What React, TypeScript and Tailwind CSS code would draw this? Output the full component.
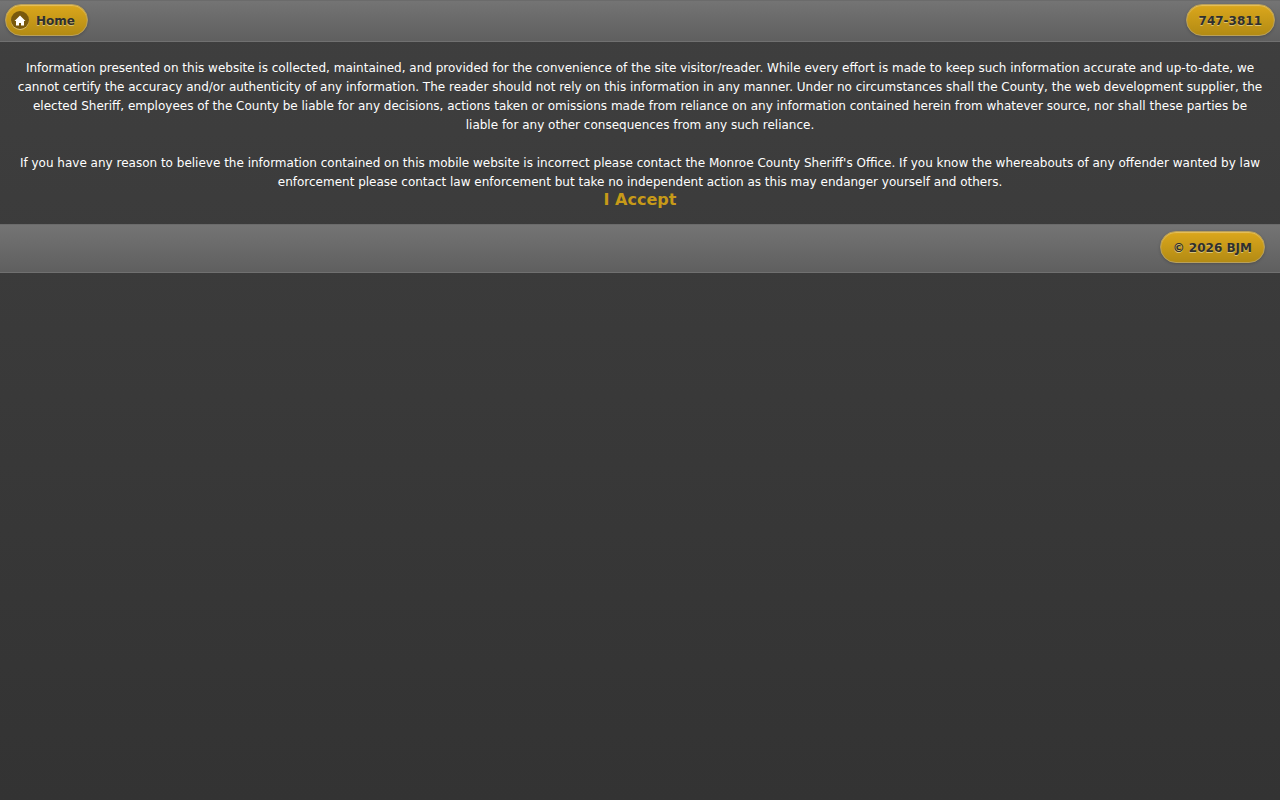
import type { ReactNode } from "react";

const barClass =
  "flex border-y border-[#2a2a2a] border-t-[#6b6b6b] border-b-[#707070] bg-linear-to-b from-[#747474] to-[#5f5f5f]";

function PillLink({ href, icon, children }: { href: string; icon?: ReactNode; children: ReactNode }) {
  return (
    <a
      href={href}
      className={`flex h-8 items-center rounded-full border border-[#b9a05a] bg-linear-to-b from-[#dba71c] to-[#b38b14] pr-3 text-xs leading-4 font-bold whitespace-nowrap text-[#2f2f2f] shadow-[inset_0_1px_1px_rgba(255,255,255,0.3),0_1px_3px_rgba(0,0,0,0.2)] [text-shadow:0_1px_0_#d9c474] ${icon ? "gap-[7px] pl-[5px]" : "pl-3"}`}
    >
      {icon}
      <span className="pt-px">{children}</span>
    </a>
  );
}

function HomeIcon() {
  return (
    <span className="flex size-[18px] items-center justify-center rounded-full bg-[#79590d] shadow-[0_1px_0_rgba(255,255,255,0.4)]">
      <svg viewBox="0 0 12 11" className="h-[11px] w-3" fill="#fff" aria-hidden="true">
        <path d="M6 .5 .5 6H2v4.5h3V8h2v2.500h3V6h1.500z" />
      </svg>
    </span>
  );
}

export default function App() {
  return (
    <div className="min-h-screen bg-linear-to-b from-[#3f3f3f] to-[#333333] font-['DejaVu_Sans',sans-serif] text-white">
      <header className={`${barClass} justify-between px-[5px] pt-[3px] pb-[5px]`}>
        <PillLink href="#home" icon={<HomeIcon />}>Home</PillLink>
        <PillLink href="tel:747-3811">747-3811</PillLink>
      </header>
      <main className="px-[15px] pt-[17px] pb-4 text-center text-xs leading-[19px]">
        <p>
          Information presented on this website is collected, maintained, and provided for the convenience of the site
          visitor/reader. While every effort is made to keep such information accurate and up-to-date, we cannot certify
          the accuracy and/or authenticity of any information. The reader should not rely on this information in any
          manner. Under no circumstances shall the County, the web development supplier, the elected Sheriff, employees
          of the County be liable for any decisions, actions taken or omissions made from reliance on any information
          contained herein from whatever source, nor shall these parties be liable for any other consequences from any
          such reliance.
        </p>
        <p className="mt-[19px]">
          If you have any reason to believe the information contained on this mobile website is incorrect please contact
          the Monroe County Sheriff's Office. If you know the whereabouts of any offender wanted by law enforcement
          please contact law enforcement but take no independent action as this may endanger yourself and others.
        </p>
        <a href="#accept" className="block text-base leading-4 font-bold text-[#c79a18]">
          I Accept
        </a>
      </main>
      <footer className={`${barClass} justify-end px-[15px] pt-1.5 pb-[9px]`}>
        <PillLink href="#copyright">© 2026 BJM</PillLink>
      </footer>
    </div>
  );
}
